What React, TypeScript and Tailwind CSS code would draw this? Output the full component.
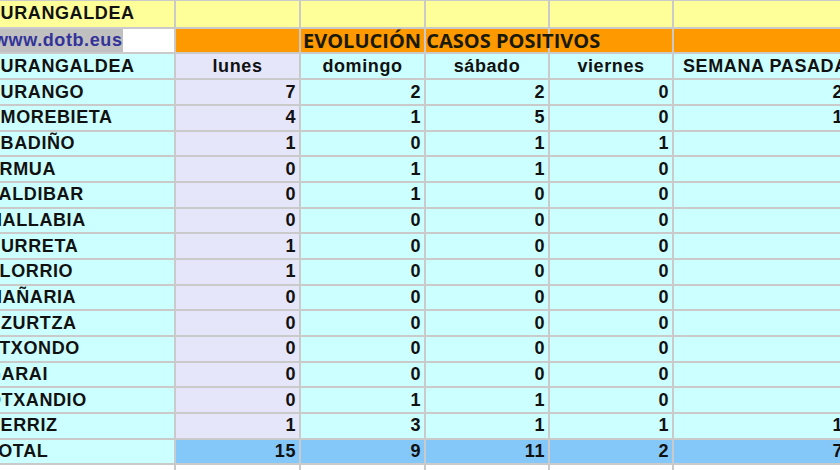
import React from "react";

type Row = { name: string; cut: boolean; vals: string[] };

const rows: Row[] = [
  { name: "DURANGO", cut: true, vals: ["7", "2", "2", "0", "2"] },
  { name: "AMOREBIETA", cut: true, vals: ["4", "1", "5", "0", "1"] },
  { name: "ABADIÑO", cut: true, vals: ["1", "0", "1", "1", ""] },
  { name: "ERMUA", cut: true, vals: ["0", "1", "1", "0", ""] },
  { name: "ZALDIBAR", cut: true, vals: ["0", "1", "0", "0", ""] },
  { name: "MALLABIA", cut: true, vals: ["0", "0", "0", "0", ""] },
  { name: "URRETA", cut: false, vals: ["1", "0", "0", "0", ""] },
  { name: "ELORRIO", cut: true, vals: ["1", "0", "0", "0", ""] },
  { name: "MAÑARIA", cut: true, vals: ["0", "0", "0", "0", ""] },
  { name: "ZURTZA", cut: false, vals: ["0", "0", "0", "0", ""] },
  { name: "ATXONDO", cut: true, vals: ["0", "0", "0", "0", ""] },
  { name: "GARAI", cut: true, vals: ["0", "0", "0", "0", ""] },
  { name: "OTXANDIO", cut: true, vals: ["0", "1", "1", "0", ""] },
  { name: "BERRIZ", cut: true, vals: ["1", "3", "1", "1", "1"] },
];

const total = ["15", "9", "11", "2", "7"];

// background per value column (lunes is lavender, the rest cyan)
const colBg = ["bg-[#e6e6fa]", "bg-[#ccffff]", "bg-[#ccffff]", "bg-[#ccffff]", "bg-[#ccffff]"];

function Label({ name, cut, bg }: { name: string; cut: boolean; bg: string }) {
  return (
    <div className={`${bg} flex items-center overflow-hidden whitespace-nowrap`}>
      <span className={cut ? "-ml-[13px]" : "ml-[1px]"}>{name}</span>
    </div>
  );
}

function Num({ v, bg }: { v: string; bg: string }) {
  return <div className={`${bg} flex items-center justify-end pr-[3px]`}>{v}</div>;
}

export default function App() {
  return (
    <div className="w-[840px] h-[470px] overflow-hidden bg-white">
      <div className="grid w-[846px] grid-cols-[174px_123px_123px_122px_122px_172px] grid-rows-[25.8px_repeat(18,23.7px)] gap-[2px] bg-[#cacaca] pt-[1px] font-['Liberation_Sans',Arial,sans-serif] text-[18px] font-bold tracking-[0.6px] text-[#111]">
        {/* row 0 */}
        <Label name="DURANGALDEA" cut bg="bg-[#ffff99]" />
        <div className="bg-[#ffff99]" />
        <div className="bg-[#ffff99]" />
        <div className="bg-[#ffff99]" />
        <div className="bg-[#ffff99]" />
        <div className="bg-[#ffff99]" />

        {/* row 1 */}
        <div className="flex items-stretch overflow-hidden whitespace-nowrap bg-white">
          <span className="-ml-[6px] flex items-center bg-[#c0c0c0] text-[#333399]">www.dotb.eus</span>
        </div>
        <div className="bg-[#ff9900]" />
        <div className="relative z-10 flex items-center whitespace-nowrap bg-[#ff9900] pl-[2px] font-['Open_Sans',sans-serif] text-[20px] font-bold tracking-normal text-[#1a1a00]">
          EVOLUCIÓN CASOS POSITIVOS
        </div>
        <div className="bg-[#ff9900]" />
        <div className="bg-[#ff9900]" />
        <div className="bg-[#ff9900]" />

        {/* row 2 */}
        <Label name="DURANGALDEA" cut bg="bg-[#ccffff]" />
        <div className="flex items-center justify-center bg-[#e6e6fa]">lunes</div>
        <div className="flex items-center justify-center bg-[#ccffff]">domingo</div>
        <div className="flex items-center justify-center bg-[#ccffff]">sábado</div>
        <div className="flex items-center justify-center bg-[#ccffff]">viernes</div>
        <div className="flex items-center whitespace-nowrap bg-[#ccffff] pl-[9px]">SEMANA PASADA</div>

        {rows.map((r) => (
          <React.Fragment key={r.name}>
            <Label name={r.name} cut={r.cut} bg="bg-[#ccffff]" />
            {r.vals.map((v, i) => (
              <Num key={i} v={v} bg={colBg[i]} />
            ))}
          </React.Fragment>
        ))}

        {/* total */}
        <Label name="TOTAL" cut bg="bg-[#ccffff]" />
        {total.map((v, i) => (
          <Num key={i} v={v} bg="bg-[#84c8fa]" />
        ))}

        {/* empty row below */}
        <div className="bg-white" />
        <div className="bg-white" />
        <div className="bg-white" />
        <div className="bg-white" />
        <div className="bg-white" />
        <div className="bg-white" />
      </div>
    </div>
  );
}
